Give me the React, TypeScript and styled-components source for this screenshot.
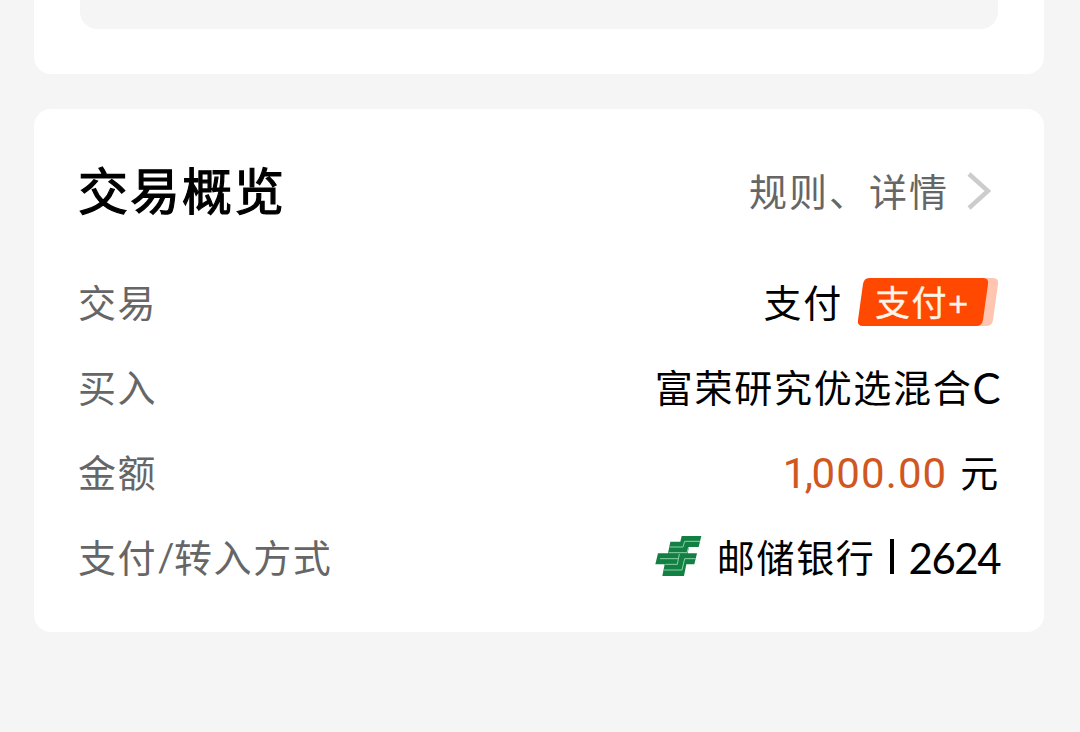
import type { ReactNode } from 'react';
import styled, { createGlobalStyle } from 'styled-components';

const GlobalStyle = createGlobalStyle`
  * {
    box-sizing: border-box;
  }

  body {
    margin: 0;
    background: #f5f5f5;
    font-family: Lato, 'Noto Sans CJK SC', sans-serif;
    color: #000;
  }
`;

const Page = styled.main`
  height: 732px;
  padding: 0 36px 0 34px;
  overflow: hidden;
`;

const PreviousCard = styled.section`
  height: 74px;
  padding: 0 46px;
  background: #fff;
  border-radius: 0 0 17px 17px;
`;

const PreviousPanel = styled.div`
  height: 29px;
  background: #f5f5f5;
  border-radius: 0 0 17px 17px;
`;

const Card = styled.section`
  height: 523px;
  margin-top: 35px;
  padding: 42px 44px 0;
  background: #fff;
  border-radius: 17px;
`;

const CardHeader = styled.header`
  height: 80px;
  margin-bottom: 28px;
  display: flex;
  align-items: center;
  justify-content: space-between;
`;

const Title = styled.h1`
  margin: 0;
  font-size: 50px;
  font-weight: 400;
  line-height: 80px;
  letter-spacing: 2px;
  -webkit-text-stroke: 1.2px #000;
`;

const DetailLink = styled.a`
  display: flex;
  align-items: center;
  color: #666;
  font-size: 38px;
  line-height: 80px;
  letter-spacing: 2px;
`;

const Chevron = styled.svg`
  width: 24px;
  height: 40px;
  margin: 0 9px 0 18px;
`;

const Row = styled.div`
  height: 85px;
  display: flex;
  align-items: center;
  justify-content: space-between;
`;

const Label = styled.span`
  color: #666;
  font-size: 38px;
  line-height: 84px;
  letter-spacing: 1.6px;
`;

const Slash = styled.span`
  margin-right: -2px;
`;

const Value = styled.span`
  display: flex;
  align-items: center;
  font-size: 38px;
  line-height: 84px;
  letter-spacing: 1.7px;
`;

const Latin = styled.span<{ $spacing: number }>`
  padding-top: 2px;
  font-size: 42px;
  line-height: 84px;
  letter-spacing: ${(props) => props.$spacing}px;
`;

const Amount = styled.span`
  display: flex;
  margin: 2px 13px 0 0;
  color: #d0571f;
  font-family: Roboto, sans-serif;
`;

const Badge = styled.span`
  position: relative;
  width: 142px;
  height: 48px;
  margin: 1px 1px 0 14px;
  display: flex;
  align-items: center;
`;

const BadgeShape = styled.svg`
  position: absolute;
  inset: 0;
`;

const BadgeText = styled.span`
  position: relative;
  padding-left: 18px;
  color: #fff4e8;
  font-size: 35px;
  line-height: 48px;
  letter-spacing: 1.5px;
  -webkit-text-stroke: 0.3px #fff4e8;
`;

const BankLogo = styled.svg`
  width: 48px;
  height: 44px;
  margin: 1px 15px 0 0;
`;

const Divider = styled.span`
  width: 4px;
  height: 35px;
  margin: 0 15px 0 14px;
  background: #000;
`;

type InfoRowProps = {
  label: ReactNode;
  children: ReactNode;
};

const InfoRow = ({ label, children }: InfoRowProps) => (
  <Row>
    <Label>{label}</Label>
    <Value>{children}</Value>
  </Row>
);

const PayBadge = () => (
  <Badge>
    <BadgeShape width="142" height="48" viewBox="0 0 142 48">
      <path
        fill="#ffc5b0"
        d="M20 0H136Q142 0 141 6L136 42Q135 48 129 48H20Z"
      />
      <path
        fill="#ff4800"
        d="M12 0H126Q132 0 131 6L126 42Q125 48 119 48H6Q0 48 1 42L6 6Q7 0 12 0Z"
      />
    </BadgeShape>
    <BadgeText>支付+</BadgeText>
  </Badge>
);

const PostalLogo = () => (
  <BankLogo viewBox="42 30 144 132">
    <path
      fill="#138043"
      d="M125 33H184L176 66H147L143 85H171L163 118H139L132 153H67L74 118H46L54 85H84L91 50H121Z"
    />
    <g fill="none" stroke="#a3dfba" strokeWidth="2.5">
      <path d="M180 49H134L129 66H89" />
      <path d="M146 66L141 83H86" />
      <path d="M60 101H114" />
      <path d="M118 87L112 118H76" />
      <path d="M167 101H134L126 135H72" />
    </g>
  </BankLogo>
);

const App = () => {
  return (
    <>
      <GlobalStyle />
      <Page>
        <PreviousCard>
          <PreviousPanel />
        </PreviousCard>
        <Card>
          <CardHeader>
            <Title>交易概览</Title>
            <DetailLink>
              规则、详情
              <Chevron viewBox="0 0 24 40">
                <path
                  d="M2 3L21 20L2 37"
                  fill="none"
                  stroke="#ccc"
                  strokeWidth="4.5"
                />
              </Chevron>
            </DetailLink>
          </CardHeader>
          <InfoRow label="交易">
            支付
            <PayBadge />
          </InfoRow>
          <InfoRow label="买入">
            富荣研究优选混合<Latin $spacing={-0.5}>C</Latin>
          </InfoRow>
          <InfoRow label="金额">
            <Amount>
              <Latin $spacing={-1.5}>1,</Latin>
              <Latin $spacing={1.1}>000.00</Latin>
            </Amount>
            元
          </InfoRow>
          <InfoRow
            label={
              <>
                支付<Slash>/</Slash>转入方式
              </>
            }
          >
            <PostalLogo />
            邮储银行
            <Divider />
            <Latin $spacing={-1.5}>2624</Latin>
          </InfoRow>
        </Card>
      </Page>
    </>
  );
};

export default App;
